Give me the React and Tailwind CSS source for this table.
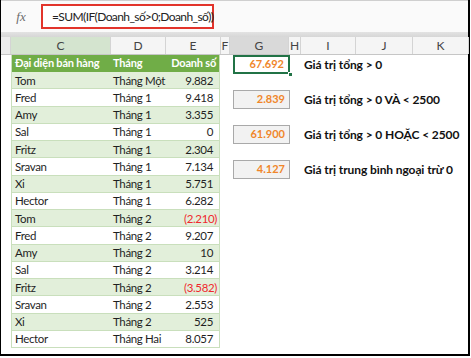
import React from 'react';

const rows = [
  ['Tom', 'Tháng Một', '9.882'],
  ['Fred', 'Tháng 1', '9.418'],
  ['Amy', 'Tháng 1', '3.355'],
  ['Sal', 'Tháng 1', '0'],
  ['Fritz', 'Tháng 1', '2.304'],
  ['Sravan', 'Tháng 1', '7.134'],
  ['Xi', 'Tháng 1', '5.751'],
  ['Hector', 'Tháng 1', '6.282'],
  ['Tom', 'Tháng 2', '(2.210)', true],
  ['Fred', 'Tháng 2', '9.207'],
  ['Amy', 'Tháng 2', '10'],
  ['Sal', 'Tháng 2', '3.214'],
  ['Fritz', 'Tháng 2', '(3.582)', true],
  ['Sravan', 'Tháng 2', '2.553'],
  ['Xi', 'Tháng 2', '525'],
  ['Hector', 'Tháng Hai', '8.057'],
];

const columns = [
  { label: '', w: 'w-[10px]', cls: 'bg-[#ececec]' },
  { label: 'C', w: 'w-[100px]', cls: 'bg-[#d4e4cf]' },
  { label: 'D', w: 'w-[55px]', cls: '' },
  { label: 'E', w: 'w-[55px]', cls: '' },
  { label: 'F', w: 'w-[9px]', cls: '' },
  { label: 'G', w: 'w-[59px]', cls: 'bg-[#d9d9d9] text-[#1e6b3c]' },
  { label: 'H', w: 'w-[12px]', cls: '' },
  { label: 'I', w: 'w-[55px]', cls: '' },
  { label: 'J', w: 'w-[57px]', cls: '' },
  { label: 'K', w: 'w-[56px]', cls: '' },
];

const results = [
  { value: '67.692', label: 'Giá trị tổng > 0', active: true },
  { value: '2.839', label: 'Giá trị tổng > 0 VÀ < 2500' },
  { value: '61.900', label: 'Giá trị tổng > 0 HOẶC < 2500' },
  { value: '4.127', label: 'Giá trị trung bình ngoại trừ 0' },
];

const ResultCell = ({ value, active }) => (
  <div className="relative w-[57px] h-[19px]">
    <div
      className={`w-full h-full flex items-center justify-end pr-[4px] text-[11px] font-bold text-[#f0862a] ${
        active ? 'border-2 border-[#217346] bg-white' : 'border border-[#a9a9a9] bg-[#f2f2f2]'
      }`}
    >
      {value}
    </div>
    {active && <div className="absolute right-[-3px] bottom-[-3px] w-[5px] h-[5px] bg-[#217346] border border-white" />}
  </div>
);

export default function App() {
  return (
    <div className="w-[471px] h-[358px] bg-white overflow-hidden" style={{ fontFamily: 'Lato, "Noto Sans", sans-serif' }}>
      <div className="w-[470px] h-[356px] border-l border-r-2 border-b-2 border-black flex flex-col">
        {/* formula bar */}
        <div className="h-[32px] shrink-0 bg-[#fafafa] border-t border-[#cfcfcf] flex items-center">
          <span
            className="w-[40px] text-center text-[13px] italic text-[#6b6b6b]"
            style={{ fontFamily: '"Liberation Serif", serif' }}
          >
            fx
          </span>
          <div className="w-[173px] h-[25px] border-2 border-[#e2342b] bg-white flex items-center pl-[9px] text-[12px] tracking-[-0.6px] text-[#222] whitespace-nowrap">
            =SUM(IF(Doanh_số&gt;0;Doanh_số))
          </div>
        </div>
        <div className="h-[5px] shrink-0 bg-gradient-to-b from-[#e3e3e3] to-[#d6d6d6]" />

        {/* column headers */}
        <div className="h-[18px] shrink-0 flex bg-[#f5f5f5] border-b border-[#c6c6c6]">
          {columns.map((c, i) => (
            <div
              key={i}
              className={`${c.w} shrink-0 h-full flex items-center justify-center text-[12px] text-[#444] border-r border-[#d4d4d4] ${c.cls}`}
            >
              {c.label}
            </div>
          ))}
        </div>

        {/* sheet body */}
        <div className="flex flex-1">
          <div className="w-[220px] shrink-0 pl-[10px]">
            <div className="w-[209px] border-r border-l border-[#c9dfbc]">
              <div className="h-[17px] flex items-center bg-[#70ad47] text-white font-bold text-[11px] tracking-[-0.2px]">
                <div className="w-[100px] pl-[3px] whitespace-nowrap">Đại diện bán hàng</div>
                <div className="w-[55px] pl-[1px]">Tháng</div>
                <div className="flex-1 text-right pr-[3px] whitespace-nowrap">Doanh số</div>
              </div>
              {rows.map(([name, month, sales, neg], i) => (
                <div
                  key={i}
                  className={`h-[17.25px] flex items-center text-[11.5px] tracking-[-0.35px] text-[#1f1f1f] border-b border-[#c9dfbc] ${
                    i % 2 === 0 ? 'bg-[#e2efda]' : 'bg-white'
                  }`}
                >
                  <div className="w-[100px] pl-[3px]">{name}</div>
                  <div className="w-[55px] pl-[1px] whitespace-nowrap">{month}</div>
                  <div className={`flex-1 text-right ${neg ? 'pr-[2px] text-[#f0282d]' : 'pr-[6px]'}`}>{sales}</div>
                </div>
              ))}
            </div>
          </div>

          <div className="flex flex-col gap-[16px]">
            {results.map((r, i) => (
              <div key={i} className="flex items-center">
                <div className="ml-[12px]">
                  <ResultCell value={r.value} active={r.active} />
                </div>
                <div className="ml-[14px] text-[12px] tracking-[-0.1px] font-bold text-[#111] whitespace-nowrap">{r.label}</div>
              </div>
            ))}
          </div>
        </div>
      </div>
    </div>
  );
}
